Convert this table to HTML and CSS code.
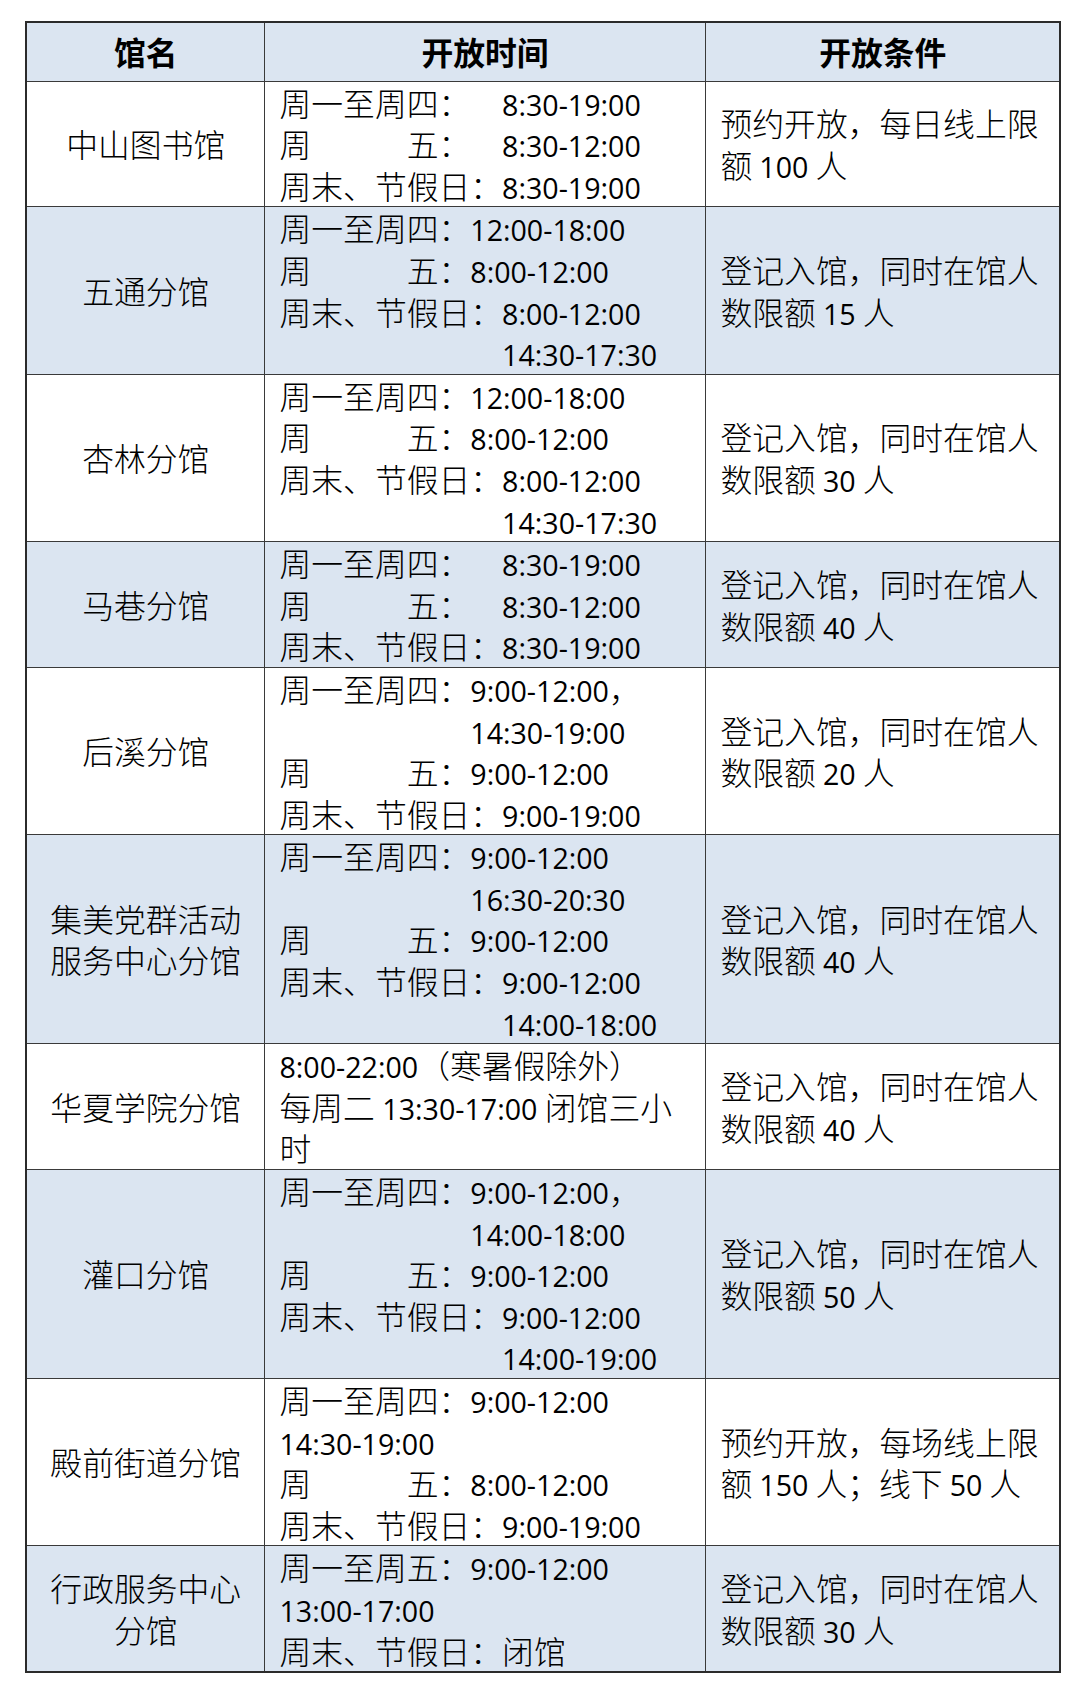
FILE: index.html
```html
<!DOCTYPE html>
<html lang="zh-CN">
<head>
<meta charset="utf-8">
<title>开放时间</title>
<link rel="stylesheet" href="styles.css">
</head>
<body>
<table class="sched">
  <colgroup>
    <col class="c-name">
    <col class="c-time">
    <col class="c-cond">
  </colgroup>
  <thead>
    <tr class="blue">
      <th>馆名</th>
      <th>开放时间</th>
      <th>开放条件</th>
    </tr>
  </thead>
  <tbody>
    <tr>
      <td class="name">中山图书馆</td>
      <td class="time">周一至周四：　<span class="n">8:30-19:00</span><br>周　　　五：　<span class="n">8:30-12:00</span><br>周末、节假日：<span class="n">8:30-19:00</span></td>
      <td class="cond">预约开放，每日线上限<br>额 <span class="n">100</span> 人</td>
    </tr>
    <tr class="blue">
      <td class="name">五通分馆</td>
      <td class="time">周一至周四：<span class="n">12:00-18:00</span><br>周　　　五：<span class="n">8:00-12:00</span><br>周末、节假日：<span class="n">8:00-12:00</span><br>　　　　　　　<span class="n">14:30-17:30</span></td>
      <td class="cond">登记入馆，同时在馆人<br>数限额 <span class="n">15</span> 人</td>
    </tr>
    <tr>
      <td class="name">杏林分馆</td>
      <td class="time">周一至周四：<span class="n">12:00-18:00</span><br>周　　　五：<span class="n">8:00-12:00</span><br>周末、节假日：<span class="n">8:00-12:00</span><br>　　　　　　　<span class="n">14:30-17:30</span></td>
      <td class="cond">登记入馆，同时在馆人<br>数限额 <span class="n">30</span> 人</td>
    </tr>
    <tr class="blue">
      <td class="name">马巷分馆</td>
      <td class="time">周一至周四：　<span class="n">8:30-19:00</span><br>周　　　五：　<span class="n">8:30-12:00</span><br>周末、节假日：<span class="n">8:30-19:00</span></td>
      <td class="cond">登记入馆，同时在馆人<br>数限额 <span class="n">40</span> 人</td>
    </tr>
    <tr>
      <td class="name">后溪分馆</td>
      <td class="time">周一至周四：<span class="n">9:00-12:00</span>，<br>　　　　　　<span class="n">14:30-19:00</span><br>周　　　五：<span class="n">9:00-12:00</span><br>周末、节假日：<span class="n">9:00-19:00</span></td>
      <td class="cond">登记入馆，同时在馆人<br>数限额 <span class="n">20</span> 人</td>
    </tr>
    <tr class="blue">
      <td class="name">集美党群活动<br>服务中心分馆</td>
      <td class="time">周一至周四：<span class="n">9:00-12:00</span><br>　　　　　　<span class="n">16:30-20:30</span><br>周　　　五：<span class="n">9:00-12:00</span><br>周末、节假日：<span class="n">9:00-12:00</span><br>　　　　　　　<span class="n">14:00-18:00</span></td>
      <td class="cond">登记入馆，同时在馆人<br>数限额 <span class="n">40</span> 人</td>
    </tr>
    <tr>
      <td class="name">华夏学院分馆</td>
      <td class="time"><span class="n">8:00-22:00</span>（寒暑假除外）<br>每周二<span class="n"> 13:30-17:00 </span>闭馆三小<br>时</td>
      <td class="cond">登记入馆，同时在馆人<br>数限额 <span class="n">40</span> 人</td>
    </tr>
    <tr class="blue">
      <td class="name">灌口分馆</td>
      <td class="time">周一至周四：<span class="n">9:00-12:00</span>，<br>　　　　　　<span class="n">14:00-18:00</span><br>周　　　五：<span class="n">9:00-12:00</span><br>周末、节假日：<span class="n">9:00-12:00</span><br>　　　　　　　<span class="n">14:00-19:00</span></td>
      <td class="cond">登记入馆，同时在馆人<br>数限额 <span class="n">50</span> 人</td>
    </tr>
    <tr>
      <td class="name">殿前街道分馆</td>
      <td class="time">周一至周四：<span class="n">9:00-12:00</span><br><span class="n">14:30-19:00</span><br>周　　　五：<span class="n">8:00-12:00</span><br>周末、节假日：<span class="n">9:00-19:00</span></td>
      <td class="cond">预约开放，每场线上限<br>额 <span class="n">150</span> 人；线下 <span class="n">50</span> 人</td>
    </tr>
    <tr class="blue">
      <td class="name">行政服务中心<br>分馆</td>
      <td class="time">周一至周五：<span class="n">9:00-12:00</span><br><span class="n">13:00-17:00</span><br>周末、节假日：闭馆</td>
      <td class="cond">登记入馆，同时在馆人<br>数限额 <span class="n">30</span> 人</td>
    </tr>
  </tbody>
</table>
</body>
</html>
```

FILE: styles.css
```css
html, body {
  margin: 0;
  padding: 0;
  background: #ffffff;
}

body {
  font-family: "Noto Sans CJK SC", "Noto Sans", sans-serif;
  color: #000;
}

.sched {
  margin: 21px 0 0 25px;
  width: 1034px;
  table-layout: fixed;
  border-collapse: collapse;
  border: 2px solid #2b2b2b;
  font-size: 31.8px;
  line-height: 41.6px;
  font-weight: 300;
  text-spacing-trim: space-all;
  font-kerning: none;
}

.c-name { width: 238px; }
.c-time { width: 441px; }
.c-cond { width: 355px; }

.sched th,
.sched td {
  border: 1px solid #3a3a3a;
  padding: 0 14px 0 15px;
  vertical-align: middle;
  white-space: nowrap;
}

.sched th {
  font-weight: 700;
  text-align: center;
  padding-top: 8px;
  padding-bottom: 8px;
}

.blue {
  background: #dbe5f1;
}

.name {
  text-align: center;
}

.time,
.cond {
  text-align: left;
}

.n {
  font-family: "Open Sans", "Noto Sans", sans-serif;
  font-size: 28.6px;
  font-weight: 400;
  line-height: 1;
}
```
